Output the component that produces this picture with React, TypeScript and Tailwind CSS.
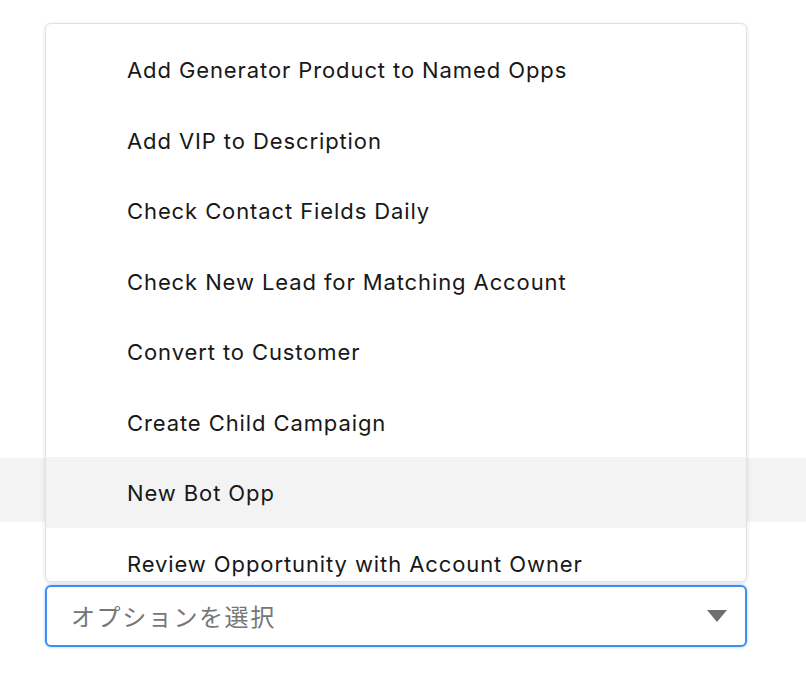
const options = [
  "Add Generator Product to Named Opps",
  "Add VIP to Description",
  "Check Contact Fields Daily",
  "Check New Lead for Matching Account",
  "Convert to Customer",
  "Create Child Campaign",
  "New Bot Opp",
  "Review Opportunity with Account Owner",
];

const highlighted = "New Bot Opp";

export default function App() {
  return (
    <div
      className="relative h-[692px] w-[806px] overflow-hidden bg-white text-[#181818]"
      style={{ fontFamily: 'Inter, "Noto Sans CJK JP", sans-serif' }}
    >
      {/* page row behind the menu */}
      <div className="absolute left-0 right-0 top-[458px] h-[64px] bg-[#f3f3f3]" />

      {/* open listbox */}
      <div className="absolute left-[45px] top-[23px] w-[702px] overflow-hidden rounded-[6px] border border-[#e2e2e2] bg-white shadow-[0_1px_4px_rgba(0,0,0,0.12)]">
        <ul className="h-[557px] overflow-hidden pt-[10px]">
          {options.map((o) => (
            <li
              key={o}
              className={`flex h-[70.5px] items-center pl-[81px] pt-[3px] text-[22px] tracking-[0.9px] ${
                o === highlighted ? "bg-[#f3f3f3]" : ""
              }`}
            >
              {o}
            </li>
          ))}
        </ul>
      </div>

      {/* select trigger */}
      <div className="absolute left-[45px] top-[585px] flex h-[62px] w-[702px] items-center justify-between rounded-[6px] border-2 border-[#3f8ef0] bg-white pl-[24px] pr-[18px] shadow-[0_0_3px_rgba(63,142,240,0.5)]">
        <span
          className="text-[24px] leading-none tracking-[1.6px] text-[#767676]"
          style={{ fontFamily: '"Noto Sans CJK JP", sans-serif' }}
        >
          オプションを選択
        </span>
        <svg width="20" height="12" viewBox="0 0 20 12">
          <path d="M0 0 H20 L10 12 Z" fill="#6f6f6f" />
        </svg>
      </div>
    </div>
  );
}
